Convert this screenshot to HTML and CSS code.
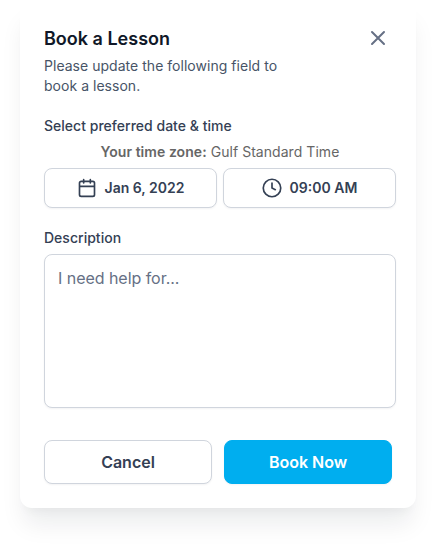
FILE: index.html
```html
<!DOCTYPE html>
<html lang="en">
<head>
<meta charset="utf-8">
<title>Book a Lesson</title>
<link rel="stylesheet" href="styles.css">
</head>
<body>
<main class="modal">
  <header class="header">
    <div>
      <h1 class="title">Book a Lesson</h1>
      <p class="subtitle">Please update the following field to<br>book a lesson.</p>
    </div>
    <button class="close" type="button" aria-label="Close">
      <svg width="24" height="24" viewBox="0 0 24 24"><path d="M18 6L6 18M6 6l12 12"/></svg>
    </button>
  </header>
  <section class="schedule">
    <h2 class="label">Select preferred date &amp; time</h2>
    <p class="timezone"><strong>Your time zone:</strong> Gulf Standard Time</p>
    <div class="pickers">
      <button class="picker" type="button">
        <svg width="20" height="20" viewBox="0 0 20 20"><path d="M17.5 8.333h-15M13.333 1.667V5M6.667 1.667V5M4.167 3.333h11.666c.92 0 1.667.747 1.667 1.667v11.667c0 .92-.746 1.666-1.667 1.666H4.167c-.92 0-1.667-.746-1.667-1.666V5c0-.92.746-1.667 1.667-1.667z"/></svg>
        <span>Jan 6, 2022</span>
      </button>
      <button class="picker" type="button">
        <svg width="20" height="20" viewBox="0 0 20 20"><circle cx="10" cy="10" r="8.75"/><path d="M10 5v5l3.333 1.667"/></svg>
        <span>09:00 AM</span>
      </button>
    </div>
  </section>
  <label class="label" for="description">Description</label>
  <textarea class="description" id="description" placeholder="I need help for..."></textarea>
  <footer class="actions">
    <button class="button" type="button">Cancel</button>
    <button class="button primary" type="button">Book Now</button>
  </footer>
</main>
</body>
</html>
```
FILE: styles.css
```css
* {
  box-sizing: border-box;
}

body {
  min-height: 548px;
  margin: 0;
  background: #fff;
  font-family: Inter, sans-serif;
}

h1, h2, p {
  margin: 0;
}

button, textarea {
  font-family: inherit;
  margin: 0;
}

svg {
  display: block;
  flex: none;
  fill: none;
  stroke: currentColor;
  stroke-width: 1.67;
  stroke-linecap: round;
  stroke-linejoin: round;
}

.modal {
  width: 396px;
  height: 508px;
  margin: 0 20px;
  padding: 25px 20px 24px 24px;
  background: #fff;
  border-radius: 12px;
  box-shadow: 0 20px 24px -4px rgba(16, 24, 40, 0.08), 0 8px 8px -4px rgba(16, 24, 40, 0.03);
}

.header {
  display: flex;
  justify-content: space-between;
  height: 91px;
}

.title {
  font-size: 18px;
  line-height: 28px;
  font-weight: 600;
  color: #101828;
}

.subtitle {
  margin-top: 3px;
  font-size: 14px;
  line-height: 20px;
  letter-spacing: 0.03px;
  color: #475467;
}

.close {
  width: 24px;
  height: 24px;
  margin: 1px 6px 0 0;
  padding: 0;
  border: 0;
  background: none;
  color: #667085;
}

.close svg {
  stroke-width: 2;
}

.label {
  display: block;
  font-size: 14px;
  line-height: 20px;
  font-weight: 500;
  letter-spacing: 0.02px;
  color: #344054;
}

.timezone {
  margin: 6px 0;
  text-align: center;
  font-size: 14px;
  line-height: 20px;
  letter-spacing: 0.05px;
  color: #666;
}

.timezone strong {
  font-weight: 600;
}

.schedule {
  margin-bottom: 20px;
}

.schedule, .description {
  width: 352px;
}

.pickers {
  display: flex;
  gap: 6px;
}

.picker, .button {
  display: flex;
  align-items: center;
  justify-content: center;
  gap: 8px;
  flex: 1;
  padding: 0;
  border: 1px solid #d0d5dd;
  border-radius: 8px;
  background: #fff;
  color: #344054;
  font-weight: 600;
  box-shadow: 0 1px 2px rgba(16, 24, 40, 0.05);
}

.picker {
  height: 40px;
  font-size: 14px;
  line-height: 20px;
}

.description {
  display: block;
  height: 154px;
  margin: 6px 0 32px;
  padding: 11px 13px;
  border: 1px solid #d0d5dd;
  border-radius: 8px;
  font-size: 16px;
  line-height: 24px;
  letter-spacing: -0.04px;
  resize: none;
  box-shadow: 0 1px 2px rgba(16, 24, 40, 0.05);
}

.description::placeholder {
  color: #667085;
  opacity: 1;
}

.actions {
  display: flex;
  gap: 12px;
  width: 348px;
}

.button {
  height: 44px;
  font-size: 16px;
  line-height: 24px;
}

.primary {
  border-color: #00aeef;
  background: #00aeef;
  color: #fff;
}
```
